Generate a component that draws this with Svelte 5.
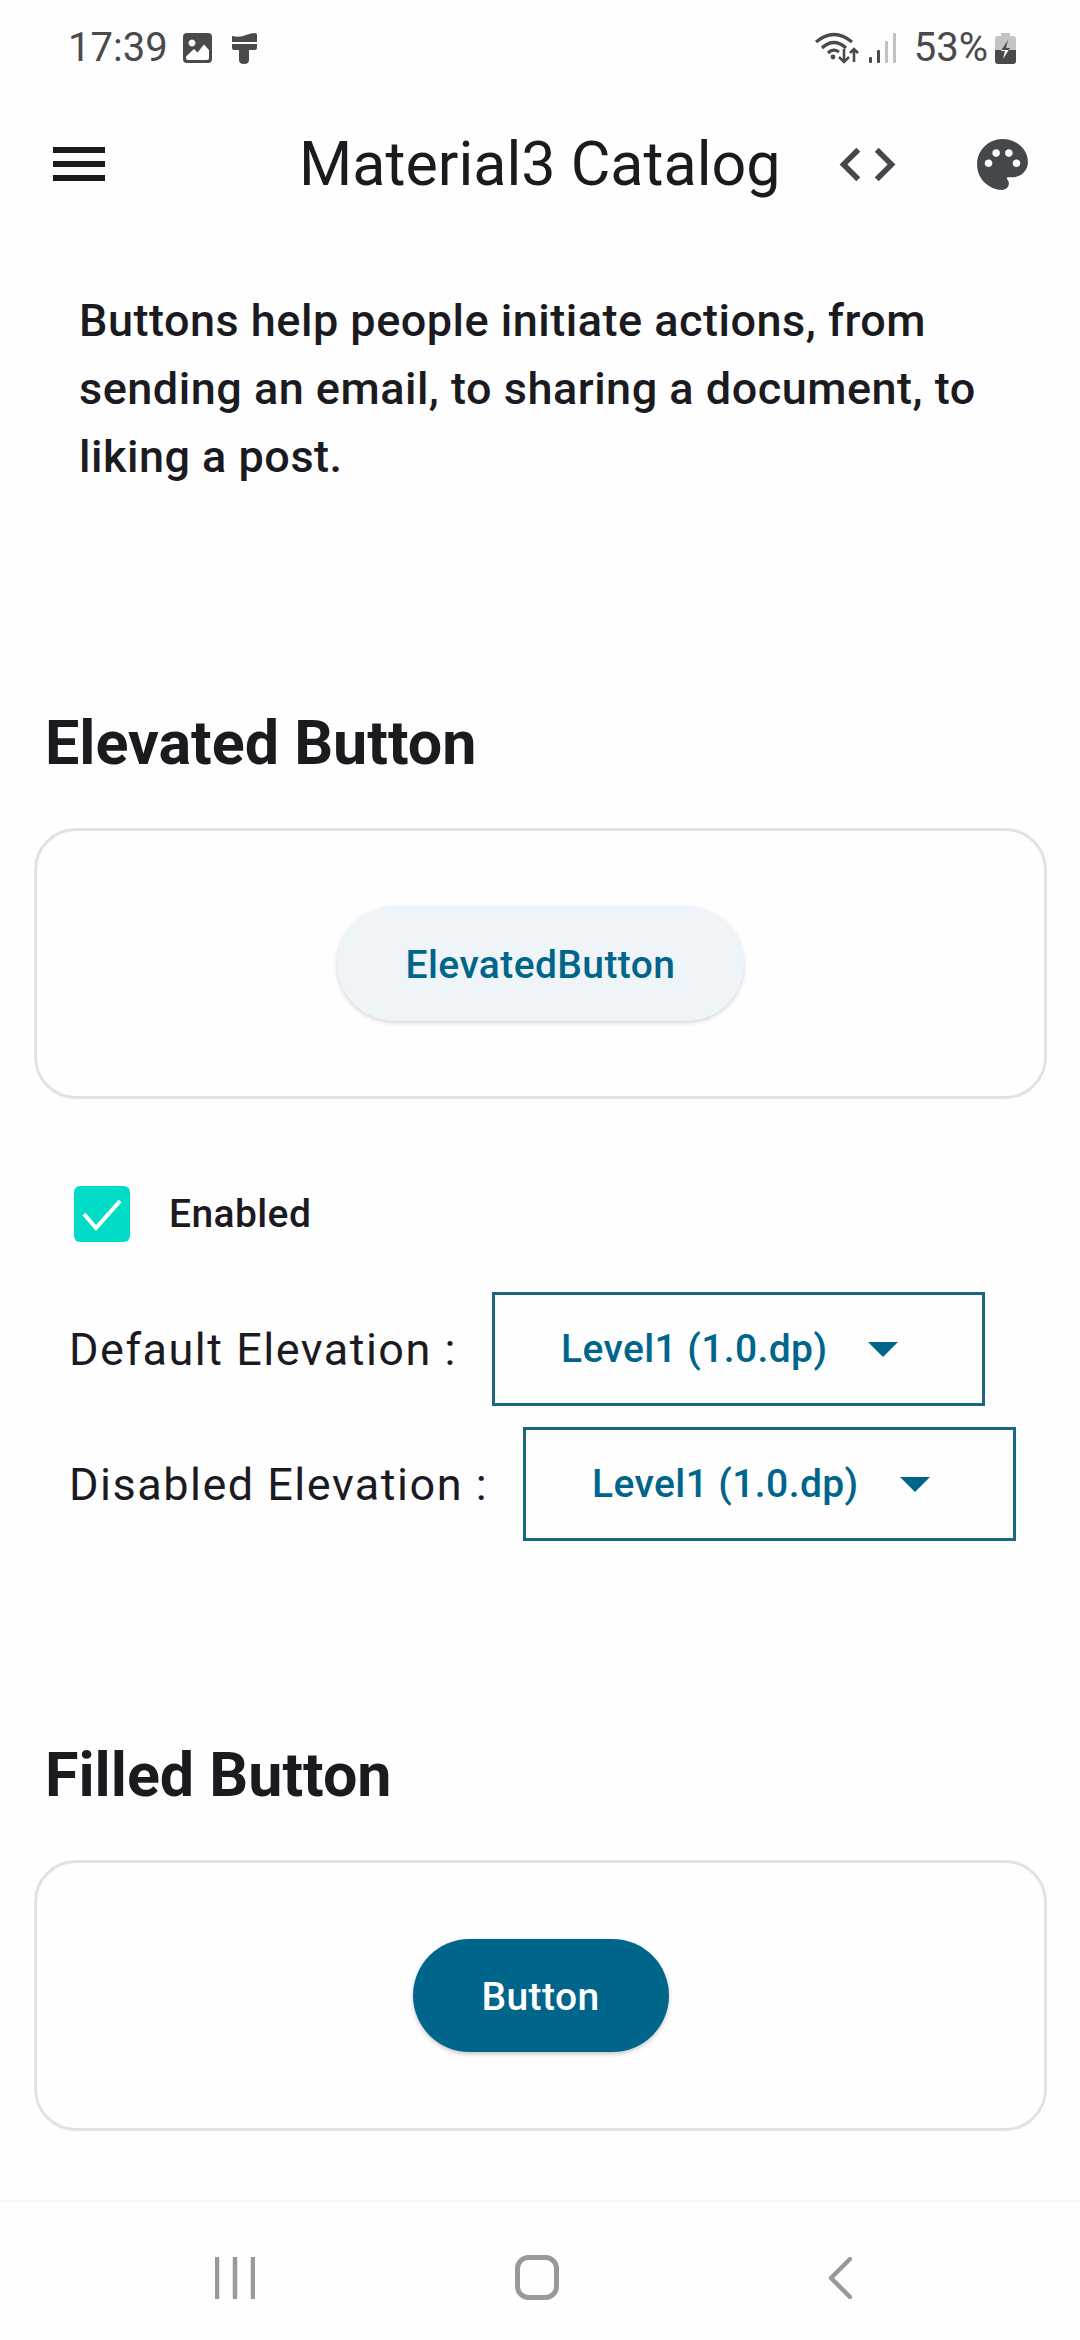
<script>
	const elevationRows = ['Default Elevation :', 'Disabled Elevation :'];
</script>

<div class="screen">
	<header class="status-bar">
		<span class="time">17:39</span>
		<svg class="pic-icon" viewBox="0 0 29 30">
			<path fill="#4a4a4a" fill-rule="evenodd" d="M4 0h21a4 4 0 0 1 4 4v22a4 4 0 0 1-4 4H4a4 4 0 0 1-4-4V4a4 4 0 0 1 4-4zM9 6.500a3.500 3.500 0 1 0 0.010 0zM3 23.500v1.500a2 2 0 0 0 2 2h19a2 2 0 0 0 2-2v-8l-5-5.500-6.500 8-3.500-3.500z" />
		</svg>
		<svg class="brush-icon" viewBox="0 0 26 31">
			<path fill="#4a4a4a" d="M1 3 Q9 5 15 2 Q20 0 24 0 Q26 0 26 2 V9 H1z M1 11 H26 V15 Q26 17 24 17 H18 V27 Q18 31 13 31 Q8 31 8 27 V17 H3 Q1 17 1 15z" />
		</svg>
		<div class="spacer"></div>
		<svg class="wifi-icon" viewBox="0 0 46 32">
			<g fill="none" stroke="#4a4a4a" stroke-width="3.200">
				<path d="M1 10 Q19 -5 37 10" />
				<path d="M7 16 Q19 5 31 16" />
				<path d="M13 21 Q18 16 24 20" />
			</g>
			<circle cx="18" cy="25" r="2.400" fill="#4a4a4a" />
			<path d="M29 17v13M24 25l5 5 5-5M39 30v-13M35 21l4-4 4 4" fill="none" stroke="#4a4a4a" stroke-width="2.600" />
		</svg>
		<svg class="signal-icon" viewBox="0 0 28 30">
			<rect x="0" y="24" width="3" height="6" rx="1" fill="#4a4a4a" />
			<rect x="8" y="17" width="3" height="13" rx="1" fill="#4a4a4a" />
			<rect x="16" y="8" width="3" height="22" rx="1" fill="#c2c2c2" />
			<rect x="24" y="0" width="3" height="30" rx="1" fill="#c2c2c2" />
		</svg>
		<span class="battery-text">53%</span>
		<svg class="battery-icon" viewBox="0 0 21 31">
			<path fill="#c4c4c4" d="M6 0h9v3h3a3 3 0 0 1 3 3v11H0V6a3 3 0 0 1 3-3h3z" />
			<path fill="#4a4a4a" d="M0 17h21v11a3 3 0 0 1-3 3H3a3 3 0 0 1-3-3z" />
			<path fill="#4a4a4a" d="M13 7L6.600 17H13.700L15 15H11z" />
			<path fill="#ffffff" d="M6.600 17L6 18H10L8 26L13.700 17z" />
		</svg>
	</header>

	<nav class="toolbar">
		<div class="menu-icon"><span></span><span></span><span></span></div>
		<h1 class="title">Material3 Catalog</h1>
		<svg class="code-icon" viewBox="0 0 24 24">
			<path fill="#44484d" d="M9.400 16.600L4.800 12l4.600-4.600L8 6l-6 6 6 6 1.400-1.400zm5.200 0l4.600-4.600-4.600-4.600L16 6l6 6-6 6-1.400-1.400z" />
		</svg>
		<svg class="palette-icon" viewBox="0 0 24 24">
			<path fill="#44484d" d="M12 2C6.490 2 2 6.490 2 12s4.490 10 10 10c1.380 0 2.500-1.120 2.500-2.500 0-.61-.23-1.200-.64-1.670-.08-.1-.13-.21-.13-.33 0-.28.22-.5.5-.5H16c3.310 0 6-2.690 6-6 0-4.960-4.490-9-10-9zm5.500 11c-.83 0-1.500-.67-1.500-1.500s.67-1.500 1.500-1.500 1.500.67 1.500 1.500-.67 1.500-1.500 1.500zm-3-4c-.83 0-1.500-.67-1.500-1.500S13.670 6 14.500 6s1.500.67 1.500 1.500S15.330 9 14.500 9zM5 11.500c0-.83.67-1.500 1.500-1.500s1.500.67 1.500 1.500S7.330 13 6.500 13 5 12.330 5 11.500zm6-4c0 .83-.67 1.500-1.500 1.500S8 8.330 8 7.500 8.670 6 9.500 6s1.500.67 1.500 1.500z" />
		</svg>
	</nav>

	<main class="content">
		<p class="description">
			Buttons help people initiate actions, from<br />sending an email, to sharing a document, to<br />liking a post.
		</p>

		<h2 class="section-title first">Elevated Button</h2>
		<div class="demo-card">
			<button class="elevated-button">ElevatedButton</button>
		</div>

		<div class="check-row">
			<span class="checkbox">
				<svg viewBox="0 0 56 56">
					<path d="M10 28l12 14L46 15" fill="none" stroke="#fff" stroke-width="4" />
				</svg>
			</span>
			<span class="check-label">Enabled</span>
		</div>

		{#each elevationRows as label, i}
			<div class="elevation-row" class:second={i === 1}>
				<span class="elevation-label">{label}</span>
				<div class="dropdown">
					<span class="dropdown-text">Level1 (1.0.dp)</span>
					<span class="dropdown-arrow"></span>
				</div>
			</div>
		{/each}

		<h2 class="section-title second">Filled Button</h2>
		<div class="demo-card">
			<button class="filled-button">Button</button>
		</div>
	</main>

	<footer class="nav-bar">
		<svg class="nav-recents" viewBox="0 0 40 42">
			<path d="M2 1.500v39M20 1.500v39M38 1.500v39" stroke="#98989d" stroke-width="4.500" stroke-linecap="round" fill="none" />
		</svg>
		<svg class="nav-home" viewBox="0 0 44 45">
			<rect x="2.500" y="2.500" width="39" height="40" rx="11" fill="none" stroke="#98989d" stroke-width="5" />
		</svg>
		<svg class="nav-back" viewBox="0 0 24 42">
			<path d="M22 2L3 21l19 19" stroke="#98989d" stroke-width="4.500" stroke-linecap="round" stroke-linejoin="round" fill="none" />
		</svg>
	</footer>
</div>

<style>
	:global(body) {
		margin: 0;
		background: #fefdff;
	}

	.screen {
		width: 1080px;
		height: 2340px;
		display: flex;
		flex-direction: column;
		overflow: hidden;
		background: #fefdff;
		font-family: Roboto, 'Liberation Sans', sans-serif;
		color: #1b1b1f;
	}

	.status-bar {
		height: 96px;
		flex: none;
		display: flex;
		align-items: center;
		padding: 0 64px 0 68px;
		box-sizing: border-box;
		color: #4a4a4a;
	}
	.time {
		font-size: 40px;
		margin-right: 15px;
		line-height: 1;
	}
	.pic-icon {
		width: 29px;
		height: 30px;
		margin-right: 19px;
	}
	.brush-icon {
		width: 26px;
		height: 31px;
	}
	.spacer {
		flex: 1;
	}
	.wifi-icon {
		width: 46px;
		height: 32px;
		margin-right: 8px;
	}
	.signal-icon {
		width: 28px;
		height: 30px;
		margin-right: 17px;
	}
	.battery-text {
		font-size: 40px;
		line-height: 1;
		margin-right: 7px;
	}
	.battery-icon {
		width: 21px;
		height: 31px;
	}

	.toolbar {
		height: 136px;
		flex: none;
		display: flex;
		align-items: center;
		padding-left: 53px;
		box-sizing: border-box;
	}
	.menu-icon {
		width: 52px;
		display: flex;
		flex-direction: column;
		gap: 8px;
		margin-right: 194px;
	}
	.menu-icon span {
		height: 6px;
		background: #1b1b1f;
	}
	.title {
		margin: 0;
		font-size: 61px;
		font-weight: 400;
		line-height: 70px;
		white-space: nowrap;
		width: 535px;
	}
	.code-icon {
		width: 67px;
		height: 67px;
		margin-right: 71px;
	}
	.palette-icon {
		width: 61px;
		height: 61px;
	}

	.content {
		flex: 1;
		min-height: 0;
	}
	.description {
		margin: 55px 0 0 79px;
		font-size: 45px;
		line-height: 68px;
		letter-spacing: 0.500px;
		font-weight: 500;
		white-space: nowrap;
	}
	.section-title {
		margin: 0 0 0 45px;
		font-size: 61px;
		font-weight: 700;
		line-height: 70px;
	}
	.section-title.first {
		margin-top: 217px;
	}
	.section-title.second {
		margin-top: 199px;
	}

	.demo-card {
		margin: 50px 0 0 34px;
		width: 1013px;
		height: 271px;
		box-sizing: border-box;
		border: 3px solid #e1e2e5;
		border-radius: 42px;
		display: flex;
		align-items: center;
		justify-content: center;
	}
	button {
		border: none;
		border-radius: 60px;
		padding: 2px 0 0;
		font-family: inherit;
		font-size: 39px;
		font-weight: 500;
		letter-spacing: 0.400px;
	}
	.elevated-button {
		width: 407px;
		height: 115px;
		background: #eff4f9;
		color: #00658a;
		box-shadow: 0 2px 4px rgba(0, 0, 0, 0.16);
	}
	.filled-button {
		width: 256px;
		height: 113px;
		background: #00658a;
		color: #fff;
		box-shadow: 0 2px 4px rgba(0, 0, 0, 0.22);
	}

	.check-row {
		margin: 87px 0 0 74px;
		display: flex;
		align-items: center;
		gap: 39px;
		height: 56px;
	}
	.checkbox {
		width: 56px;
		height: 56px;
		border-radius: 6px;
		background: #00dcc6;
		display: block;
	}
	.checkbox svg {
		display: block;
		width: 56px;
		height: 56px;
	}
	.check-label {
		font-size: 39px;
		font-weight: 500;
		letter-spacing: 0.400px;
	}

	.elevation-row {
		margin: 50px 0 0 69px;
		display: flex;
		align-items: center;
		gap: 35px;
	}
	.elevation-row.second {
		margin-top: 21px;
	}
	.elevation-label {
		font-size: 45px;
		letter-spacing: 1.500px;
		white-space: nowrap;
	}
	.dropdown {
		width: 493px;
		height: 114px;
		box-sizing: border-box;
		border: 3px solid #1a6680;
		display: flex;
		align-items: center;
		padding-left: 66px;
	}
	.dropdown-text {
		font-size: 39px;
		font-weight: 500;
		letter-spacing: 0.400px;
		color: #00658a;
		white-space: nowrap;
	}
	.dropdown-arrow {
		margin-left: 41px;
		width: 0;
		height: 0;
		border-left: 15px solid transparent;
		border-right: 15px solid transparent;
		border-top: 15px solid #00658a;
	}

	.nav-bar {
		height: 140px;
		flex: none;
		box-sizing: border-box;
		border-top: 2px solid #f9f8fa;
		display: flex;
		align-items: flex-start;
		padding: 53px 0 0 215px;
	}
	.nav-recents {
		width: 40px;
		height: 42px;
		margin: 2px 260px 0 0;
	}
	.nav-home {
		width: 44px;
		height: 45px;
		margin-right: 269px;
	}
	.nav-back {
		width: 24px;
		height: 42px;
		margin-top: 2px;
	}
</style>
